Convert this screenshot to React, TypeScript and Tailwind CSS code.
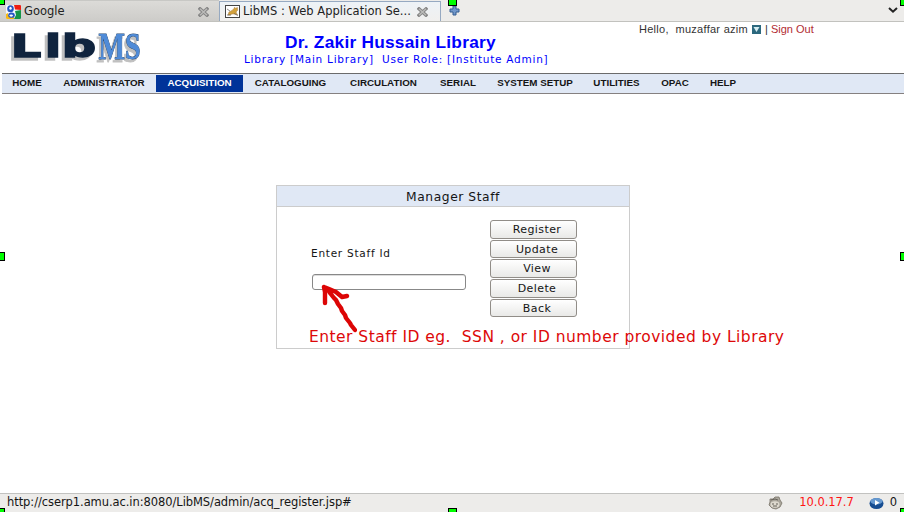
import React from "react";

const NAV = [
  { label: "HOME", width: "w-[50px]" },
  { label: "ADMINISTRATOR", width: "w-[104px]" },
  { label: "ACQUISITION", width: "w-[87px]", active: true },
  { label: "CATALOGUING", width: "w-[95px]" },
  { label: "CIRCULATION", width: "w-[91px]" },
  { label: "SERIAL", width: "w-[58px]" },
  { label: "SYSTEM SETUP", width: "w-[96px]" },
  { label: "UTILITIES", width: "w-[67px]" },
  { label: "OPAC", width: "w-[50px]" },
  { label: "HELP", width: "w-[46px]" },
];

const ACTIONS = ["Register", "Update", "View", "Delete", "Back"];

function CloseIcon() {
  return (
    <svg width="11" height="10" viewBox="0 0 11 10" className="shrink-0">
      <path d="M2 1.8 9 8.2M9 1.8 2 8.2" stroke="#858585" strokeWidth="3.2" strokeLinecap="square" />
      <path d="M2 1.8 9 8.2M9 1.8 2 8.2" stroke="#bcbcba" strokeWidth="1.4" />
    </svg>
  );
}

function GoogleIcon() {
  return (
    <svg width="15" height="14" viewBox="0 0 15 14" className="shrink-0">
      <rect width="15" height="14" rx="1" fill="#f6f8fc" />
      <path d="M8 0h6a1 1 0 0 1 1 1v4L9 4.5Z" fill="#ee1c12" />
      <path d="M9 6 15 5v8a1 1 0 0 1-1 1H8l2-4Z" fill="#169447" />
      <path d="M0 9 2 8v2l3 2 3-1v3H1a1 1 0 0 1-1-1Z" fill="#f7b916" />
      <ellipse cx="4.5" cy="3.7" rx="3.3" ry="3.5" fill="#2456c2" />
      <ellipse cx="4.5" cy="3.3" rx="1.2" ry="1.5" fill="#fff" />
      <ellipse cx="5.5" cy="10.2" rx="3.3" ry="2.6" fill="#2456c2" />
      <ellipse cx="5.2" cy="10.6" rx="1.8" ry="1.1" fill="#fff" />
    </svg>
  );
}

function CatIcon() {
  return (
    <svg width="15" height="13" viewBox="0 0 15 13" className="shrink-0">
      <rect x=".5" y=".5" width="14" height="12" fill="#fff" stroke="#444" />
      <path d="M3 10 4 7 7 5.5 9 3.5 9.5 2.2 10.5 3.2 12.5 2.5V5.5L11 7l1.5 3-3-1L7 9 5 10Z" fill="#d2a13b" stroke="#a57b49" strokeWidth=".5" />
      <path d="m2 4 3 2M2 10h4M9 8.5l4 2" stroke="#66605a" strokeWidth=".7" />
    </svg>
  );
}

function Logo() {
  return (
    <svg width="144" height="48" viewBox="0 0 144 48" className="-mr-1 shrink-0">
      <text
        x="5.2 27.9 39.1"
        y="35.2"
        transform="scale(1.5 1)"
        fontFamily="'DejaVu Sans', sans-serif"
        fontWeight="bold"
        fontSize="32"
        fill="#10243e"
        stroke="#10243e"
        strokeWidth="1.4"
        className="drop-shadow-[-2px_3px_0_#c0c0c0]"
      >
        Lib
      </text>
      <text
        x="95.5"
        y="37"
        textLength="42"
        lengthAdjust="spacingAndGlyphs"
        fontFamily="'Liberation Serif', serif"
        fontWeight="bold"
        fontSize="37"
        fill="#4f8bd8"
        stroke="#24466f"
        strokeWidth="0.9"
        paintOrder="stroke"
        className="drop-shadow-[-2px_3px_0_#c0c0c0]"
      >
        MS
      </text>
    </svg>
  );
}

function BrowserTabs() {
  return (
    <div className="flex h-[22px] border-b border-[#c2c2be] bg-[#edecea] font-['DejaVu_Sans',sans-serif] text-[11.5px] text-[#222]">
      <div className="flex w-[219px] items-center border-t border-[#c8c8c5] bg-gradient-to-b from-[#dcdbd8] to-[#cdccc9] pl-[6px] pr-[10px] pt-[2px]">
        <GoogleIcon />
        <span className="ml-[3px] grow">Google</span>
        <CloseIcon />
      </div>
      <div className="mt-px flex w-[222px] items-center border border-b-0 border-[#96a9c1] bg-gradient-to-b from-[#edf2f7] to-[#f1f0ee] pl-[5px] pr-[12px]">
        <CatIcon />
        <span className="ml-[3px] grow whitespace-nowrap tracking-[0.02px]">LibMS : Web Application Se...</span>
        <CloseIcon />
      </div>
      <svg width="11" height="11" viewBox="0 0 11 11" className="ml-[8px] mt-[5px]">
        <path d="M4 1h3v3h3v3H7v3H4V7H1V4h3Z" fill="#7197ca" stroke="#345c91" />
      </svg>
      <svg width="10" height="7" viewBox="0 0 10 7" className="ml-auto mr-[6px] mt-[7px]">
        <path d="m1 1 4 3.7L9 1" fill="none" stroke="#222" strokeWidth="2" />
      </svg>
    </div>
  );
}

function PageHeader() {
  return (
    <header className="flex h-[51px] pl-[3px]">
      <Logo />
      <div className="ml-[101px] w-[305px] shrink-0 text-[#0000ff]">
        <h1 className="pt-[10px] pl-[41px] font-['Liberation_Sans',sans-serif] text-[17.3px] leading-[20px] font-bold tracking-[0.25px] whitespace-nowrap">Dr. Zakir Hussain Library</h1>
        <p className="pt-px font-['DejaVu_Sans',sans-serif] text-[10.5px] leading-[13px] tracking-[0.75px] whitespace-pre">Library [Main Library]  User Role: [Institute Admin]</p>
      </div>
      <div className="ml-[90px] flex h-[15px] items-center font-['Liberation_Sans',sans-serif] text-[11px] whitespace-pre text-[#333]">
        <span className="tracking-[0.28px]">Hello,  muzaffar azim</span>
        <svg width="9" height="9" viewBox="0 0 9 9" className="mr-[4px] ml-[4px]">
          <rect width="9" height="9" fill="#2c687d" />
          <path d="M1.5 2h6L4.5 7Z" fill="#d5edf2" />
        </svg>
        <span>| </span>
        <a className="text-[#b22c32]">Sign Out</a>
      </div>
    </header>
  );
}

function NavBar() {
  return (
    <nav className="ml-[2px] flex h-[21px] border-t border-b border-t-[#6b6b6b] border-b-[#858080] bg-[#e0e8f5] pt-px pb-px font-['Liberation_Sans',sans-serif] text-[9.8px] font-bold text-[#151515]">
      {NAV.map((item) => (
        <div key={item.label} className={`${item.width} flex shrink-0 items-center justify-center whitespace-nowrap ${item.active ? "bg-[#003399] text-white" : ""}`}>
          {item.label}
        </div>
      ))}
    </nav>
  );
}

function StaffPanel() {
  return (
    <section className="relative ml-[276px] h-[164px] w-[354px] border border-[#cccccc] font-['DejaVu_Sans',sans-serif] text-[#151515]">
      <h2 className="flex h-[21px] items-center justify-center border-b border-[#ccc] bg-[#e0e8f5] pt-[2px] text-[12.3px] tracking-[0.55px]">Manager Staff</h2>
      <div className="flex">
        <div className="w-[213px] pl-[34px] pt-[38px]">
          <label className="block text-[10.5px] leading-[17px] tracking-[0.75px]">Enter Staff Id</label>
          <input className="mt-[12px] ml-px block h-[16px] w-[154px] rounded-[3px] border border-[#888] bg-white shadow-[inset_0_1px_0_#ddd]" />
        </div>
        <div className="flex flex-col gap-px pt-[13px]">
          {ACTIONS.map((action) => (
            <button key={action} className="h-[18.7px] w-[87px] rounded-[3px] border border-[#918d88] bg-gradient-to-b from-white to-[#e9e9e7] pt-px pl-[7px] text-[11px] leading-[16px] tracking-[0.4px]">{action}</button>
          ))}
        </div>
      </div>
      <svg width="40" height="54" viewBox="0 0 40 54" className="absolute left-[40px] top-[94px]">
        <path d="M7 7 12 11 13 13 17 18 19 20 21 24 24 28 25 31 28 35 29 38 33 43 34 45 38 50M7 7 8 12V23M7 7 12 9 19 12 25 17 30 16" fill="none" stroke="#dc0505" strokeWidth="4.4" strokeLinecap="round" strokeLinejoin="round" />
      </svg>
      <p className="absolute left-[32px] top-[141px] text-[15.5px] leading-[20px] tracking-[0.47px] whitespace-pre text-[#dd0808]">Enter Staff ID eg.  SSN , or ID number provided by Library</p>
    </section>
  );
}

function StatusBar() {
  return (
    <footer className="flex h-[19px] items-center border-t border-[#c2c2c0] bg-[#edecea] pl-[7px] pr-[7px] font-['DejaVu_Sans',sans-serif] text-[11.5px] text-[#151515]">
      <span className="grow tracking-[-0.07px]">http://cserp1.amu.ac.in:8080/LibMS/admin/acq_register.jsp#</span>
      <svg width="15" height="14" viewBox="0 0 15 14">
        <path d="M2 3 5 3 7 1 11 1 12 4 14 7 12 11 8 13 4 12 1 9 2 6Z" fill="#aaa69c" stroke="#777267" strokeWidth=".8" />
        <ellipse cx="7" cy="8.5" rx="4.5" ry="3.2" fill="#ddd9ce" />
        <path d="M5 7v2M9 7v2M5 10h4M3 4l4-1 3 1" fill="none" stroke="#656159" />
      </svg>
      <span className="ml-[16px] tracking-[-0.05px] text-[#ff1515]">10.0.17.7</span>
      <svg width="15" height="13" viewBox="0 0 15 13" className="ml-[15px]">
        <ellipse cx="7.5" cy="6.5" rx="7" ry="5.5" fill="#174d91" />
        <ellipse cx="7.5" cy="4.2" rx="6" ry="3.1" fill="#6699d0" />
        <path d="M6 3 10.5 5.7 6 8.4Z" fill="#fff" />
      </svg>
      <span className="ml-[6px]">0</span>
    </footer>
  );
}

const HANDLES = [
  "left-[-4px] top-[-4px]",
  "left-[448px] top-[-3px]",
  "left-[900px] top-[-3px]",
  "left-[-4px] top-[252px]",
  "left-[900px] top-[252px]",
  "left-[-4px] top-[508px]",
  "left-[448px] top-[508px]",
  "left-[900px] top-[508px]",
];

export default function App() {
  return (
    <div className="relative flex h-[512px] w-[904px] flex-col overflow-hidden bg-white">
      <BrowserTabs />
      <PageHeader />
      <NavBar />
      <main className="grow pt-[91px]">
        <StaffPanel />
      </main>
      <StatusBar />
      {HANDLES.map((position) => (
        <span key={position} className={`absolute h-[9px] w-[9px] border border-black bg-[#00ff00] ${position}`} />
      ))}
    </div>
  );
}
